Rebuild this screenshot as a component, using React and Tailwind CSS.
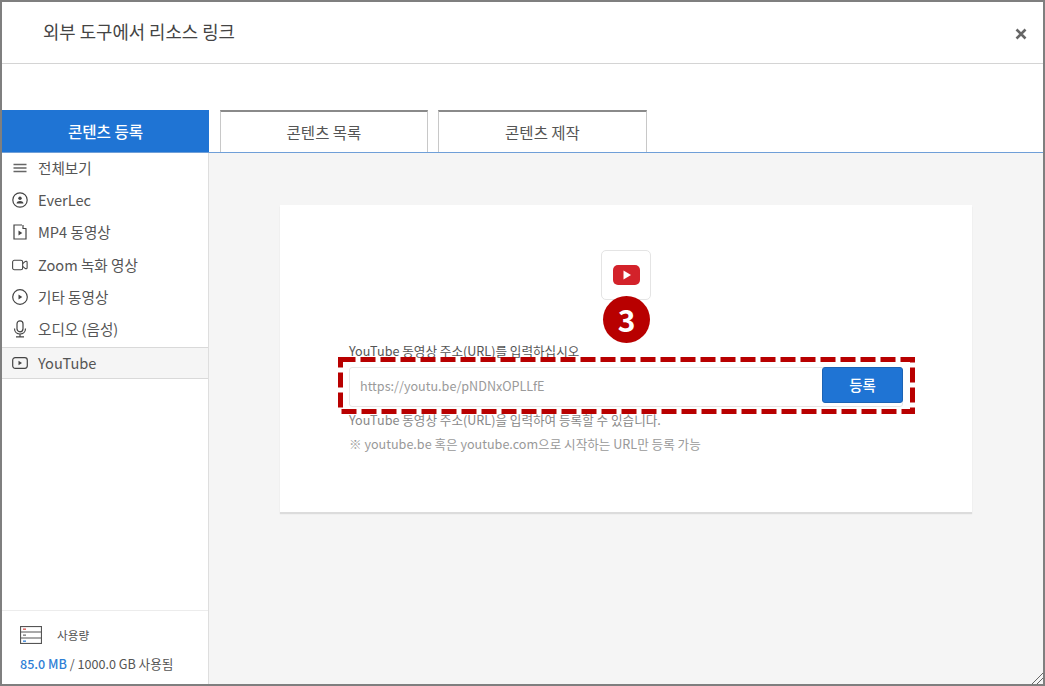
import React from 'react';

const font = { fontFamily: '"Noto Sans CJK KR", "Noto Sans", sans-serif' };

function MenuLines() {
  return (
    <svg width="16" height="16" viewBox="0 0 16 16" fill="none">
      <path d="M1.500 4.500h13M1.500 8h13M1.500 11.500h13" stroke="#666" strokeWidth="1.300" />
    </svg>
  );
}

function EverLecIcon() {
  return (
    <svg width="16" height="16" viewBox="0 0 16 16" fill="none">
      <circle cx="8" cy="8" r="7.200" stroke="#444" strokeWidth="1.200" />
      <circle cx="8" cy="6.200" r="1.700" fill="#444" />
      <path d="M4.500 11.500c.4-1.800 1.700-2.500 3.500-2.500s3.100.7 3.500 2.500z" fill="#444" />
    </svg>
  );
}

function FileIcon() {
  return (
    <svg width="16" height="16" viewBox="0 0 16 16" fill="none">
      <path d="M10 1H2v14h12V5" stroke="#444" strokeWidth="1.200" />
      <path d="M11 1v3.500h3.500" stroke="#444" strokeWidth="1.200" />
      <path d="M6.500 6.500v5L10.300 9z" fill="#444" />
    </svg>
  );
}

function VideoIcon() {
  return (
    <svg width="18" height="14" viewBox="0 0 18 14" fill="none">
      <rect x="0.700" y="1.700" width="11.300" height="10.600" rx="2" stroke="#444" strokeWidth="1.200" />
      <path d="M12 5.500l3-2.500c.8-.5 2-.2 2 1v6c0 1.200-1.200 1.500-2 1l-3-2.500" stroke="#444" strokeWidth="1.200" />
    </svg>
  );
}

function PlayCircle() {
  return (
    <svg width="16" height="16" viewBox="0 0 16 16" fill="none">
      <circle cx="8" cy="8" r="7.300" stroke="#444" strokeWidth="1.200" />
      <path d="M6.500 5.500v5L10.300 8z" fill="#444" />
    </svg>
  );
}

function MicIcon() {
  return (
    <svg width="16" height="18" viewBox="0 0 16 18" fill="none">
      <rect x="5" y="0.800" width="6" height="11" rx="3" stroke="#444" strokeWidth="1.200" />
      <path d="M2.500 8.500c0 3.500 2.500 5.500 5.500 5.500s5.500-2 5.500-5.500M8 14v2.500M4 16.800h8" stroke="#444" strokeWidth="1.200" />
    </svg>
  );
}

function YoutubeOutline() {
  return (
    <svg width="16" height="14" viewBox="0 0 16 14" fill="none">
      <rect x="0.700" y="1.700" width="14.600" height="10.600" rx="2.500" stroke="#444" strokeWidth="1.200" />
      <path d="M6.500 4.800v4.400L10 7z" fill="#444" />
    </svg>
  );
}

function StorageIcon() {
  return (
    <svg width="22" height="18" viewBox="0 0 22 18" fill="none">
      <rect x="0.500" y="0.500" width="21" height="17" fill="#fff" stroke="#555" strokeWidth="1.200" />
      <path d="M0.500 6h21M0.500 12h21" stroke="#555" strokeWidth="1.200" />
      <rect x="3" y="2.500" width="3" height="1.300" fill="#d9534f" />
      <rect x="3" y="8.500" width="3" height="1.300" fill="#777" />
      <rect x="3" y="14.500" width="3" height="1.300" fill="#2f7fd6" />
    </svg>
  );
}

const menuItems = [
  { label: '전체보기', icon: <MenuLines /> },
  { label: 'EverLec', icon: <EverLecIcon /> },
  { label: 'MP4 동영상', icon: <FileIcon /> },
  { label: 'Zoom 녹화 영상', icon: <VideoIcon /> },
  { label: '기타 동영상', icon: <PlayCircle /> },
  { label: '오디오 (음성)', icon: <MicIcon /> },
];

export default function App() {
  return (
    <div style={font} className="relative flex h-[686px] w-[1045px] flex-col overflow-hidden border-2 border-[#7f7f7f] bg-white text-[#555]">
      {/* header */}
      <div className="flex h-[62px] shrink-0 items-center justify-between border-b border-[#d4d4d4] pb-[2px] pl-[41px] pr-[16px]">
        <h1 className="text-[17.800px] font-normal text-[#444]">외부 도구에서 리소스 링크</h1>
        <svg className="mt-[4px]" width="12" height="12" viewBox="0 0 12 12" fill="none">
          <path d="M1.500 1.500l9 9M10.500 1.500l-9 9" stroke="#666" strokeWidth="2.600" />
        </svg>
      </div>

      <div className="h-[46px] shrink-0" />

      {/* tabs */}
      <div className="flex h-[43px] shrink-0 border-b border-[#6f9fd8]">
        <div className="flex w-[207px] items-center justify-center bg-[#1f74d4] pt-[1px] text-[15.600px] font-medium text-white">콘텐츠 등록</div>
        <div className="ml-[11px] flex w-[208px] items-center justify-center border-x border-t-2 border-x-[#c8c8c8] border-t-[#8a8a8a] bg-white pt-[1px] text-[15.500px] text-[#555]">콘텐츠 목록</div>
        <div className="ml-[10px] flex w-[209px] items-center justify-center border-x border-t-2 border-x-[#c8c8c8] border-t-[#8a8a8a] bg-white pt-[1px] text-[15.500px] text-[#555]">콘텐츠 제작</div>
      </div>

      <div className="flex min-h-0 flex-1">
        {/* sidebar */}
        <aside className="flex w-[207px] shrink-0 flex-col border-r border-[#dedede] bg-white">
          <ul className="mt-[-1.500px] flex flex-col">
            {menuItems.map((item) => (
              <li key={item.label} className="flex h-[32.300px] items-center gap-[10px] pl-[10px] text-[14.600px] text-[#555]">
                <span className="flex w-[16px] justify-center">{item.icon}</span>
                <span>{item.label}</span>
              </li>
            ))}
            <li className="mt-[1.500px] flex h-[32px] items-center gap-[10px] border-y border-[#d9d9d9] bg-[#f5f5f5] pl-[10px] text-[14.600px] text-[#555]">
              <span className="flex w-[16px] justify-center"><YoutubeOutline /></span>
              <span>YouTube</span>
            </li>
          </ul>
          <div className="mt-auto h-[74px] border-t border-[#ececec] pl-[18px] pt-[15px]">
            <div className="flex items-center gap-[15px]">
              <StorageIcon />
              <span className="text-[11.700px] text-[#555]">사용량</span>
            </div>
            <p className="mt-[11px] text-[12.600px] text-[#555]">
              <span className="font-medium text-[#2f7fd6]">85.0 MB</span> / 1000.0 GB 사용됨
            </p>
          </div>
        </aside>

        {/* main */}
        <main className="relative flex-1 bg-[#f5f5f5] pl-[71px] pt-[52px]">
          <section className="flex h-[307px] w-[692px] flex-col items-center bg-white pt-[45px] shadow-[0_2px_1px_#dcdcdc]">
            <div className="flex h-[50px] w-[50px] items-center justify-center rounded-[5px] border border-[#e4e4e4] bg-white">
              <svg width="27" height="20" viewBox="0 0 27 20">
                <rect width="27" height="20" rx="5" fill="#d3222a" />
                <path d="M10.500 5.500v9l7.500-4.500z" fill="#fff" />
              </svg>
            </div>
            <div className="ml-[69px] mt-[42px] w-[554px] self-start">
              <p className="h-[18px] text-[12.600px] leading-[18px] text-[#555]">YouTube 동영상 주소(URL)를 입력하십시오</p>
              <div className="mt-[6.500px] flex h-[40px] items-center rounded-[3px] border border-[#e6e6e6] bg-white pl-[10px]">
                <span className="flex-1 text-[12.600px] text-[#9a9a9a]">https://youtu.be/pNDNxOPLLfE</span>
                <button className="mb-[4px] mr-[-1px] h-[36px] w-[81px] rounded-[3px] border border-[#1b63b5] bg-[#1f74d4] text-[14.500px] font-medium text-white">등록</button>
              </div>
              <p className="mt-[4.500px] text-[12.600px] leading-[18px] text-[#888]">YouTube 동영상 주소(URL)을 입력하여 등록할 수 있습니다.</p>
              <p className="mt-[6px] text-[12.600px] leading-[18px] text-[#999]">※ youtube.be 혹은 youtube.com으로 시작하는 URL만 등록 가능</p>
            </div>
          </section>

          {/* annotation overlay */}
          <div className="absolute left-[394px] top-[143px] flex h-[47px] w-[47px] items-center justify-center rounded-full bg-[#b80000] text-[30px] font-bold text-white">3</div>
          <svg className="absolute left-[129px] top-[204px]" width="577" height="57" viewBox="0 0 577 57" fill="none">
            <rect x="2.500" y="2.500" width="572" height="52" stroke="#b80000" strokeWidth="5" strokeDasharray="15 5" />
          </svg>
          {/* resize grip */}
          <svg className="absolute bottom-0 right-0" width="12" height="12" viewBox="0 0 12 12" fill="none">
            <path d="M1 12L12 1M6 12l6-6" stroke="#666" />
          </svg>
        </main>
      </div>
    </div>
  );
}
